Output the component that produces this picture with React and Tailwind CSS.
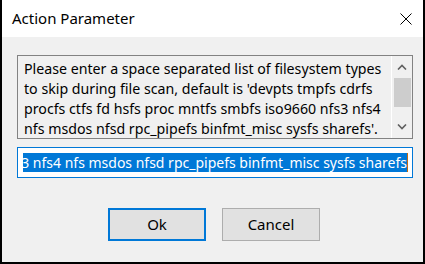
import React from "react";

const lines = [
  "Please enter a space separated list of filesystem types",
  "to skip during file scan, default is 'devpts tmpfs cdrfs",
  "procfs ctfs fd hsfs proc mntfs smbfs iso9660 nfs3 nfs4",
  "nfs msdos nfsd rpc_pipefs binfmt_misc sysfs sharefs'.",
];

const Chevron = ({ up }) => (
  <svg width="10" height="6" viewBox="0 0 10 6" fill="none">
    <path
      d={up ? "M1 5.5 L5 1.5 L9 5.5" : "M1 0.5 L5 4.5 L9 0.5"}
      stroke="#606060"
      strokeWidth="1.6"
    />
  </svg>
);

const App = () => {
  return (
    <div
      className="w-[425px] h-[264px] bg-[#f0f0f0] border-x-2 border-b-2 border-black flex flex-col text-black"
      style={{ fontFamily: "'Noto Sans', 'Open Sans', sans-serif" }}
    >
      {/* title bar */}
      <div className="h-[37px] bg-white flex items-center justify-between pl-[10px] pr-[10px] shrink-0">
        <span className="text-[15px] leading-none">Action Parameter</span>
        <svg width="12" height="12" viewBox="0 0 12 12" className="mr-[1px]">
          <path d="M0.5 0.5 L11.5 11.5 M11.5 0.5 L0.5 11.5" stroke="#000" strokeWidth="1" />
        </svg>
      </div>

      <div className="pl-[15px] pt-[18px] flex flex-col">
        {/* read-only multiline box */}
        <div className="w-[396px] h-[84px] border border-[#828282] flex">
          <div className="flex-1 pl-[6px] pt-[3px] text-[14.2px] leading-[20px] whitespace-nowrap overflow-hidden">
            {lines.map((l) => (
              <div key={l}>{l}</div>
            ))}
          </div>
          <div className="w-[21px] border-l border-[#ffffff] flex flex-col items-center">
            <div className="h-[22px] flex items-center justify-center">
              <Chevron up />
            </div>
            <div className="w-[17px] h-[29px] bg-[#cdcdcd]" />
            <div className="flex-1" />
            <div className="h-[22px] flex items-center justify-center">
              <Chevron />
            </div>
          </div>
        </div>

        {/* input, scrolled to the end of its value */}
        <div className="mt-[8px] w-[396px] h-[31px] border border-[#0078d7] bg-white flex items-center pl-[5px] pr-[4px]">
          <div className="flex-1 overflow-hidden flex justify-end items-center">
            <span className="shrink-0 bg-[#0078d7] text-white text-[14px] leading-[19px] whitespace-nowrap">
              3 nfs4 nfs msdos nfsd rpc_pipefs binfmt_misc sysfs sharefs
            </span>
            <span className="shrink-0 w-[1px] h-[19px] bg-[#c46a10]" />
          </div>
        </div>

        {/* buttons */}
        <div className="mt-[30px] ml-[91px] flex gap-[16px]">
          <button className="w-[98px] h-[33px] border-2 border-[#0078d7] bg-[#e1e1e1] text-[15px]">
            Ok
          </button>
          <button className="w-[98px] h-[33px] border border-[#adadad] bg-[#e1e1e1] text-[15px]">
            Cancel
          </button>
        </div>
      </div>
    </div>
  );
};

export default App;
